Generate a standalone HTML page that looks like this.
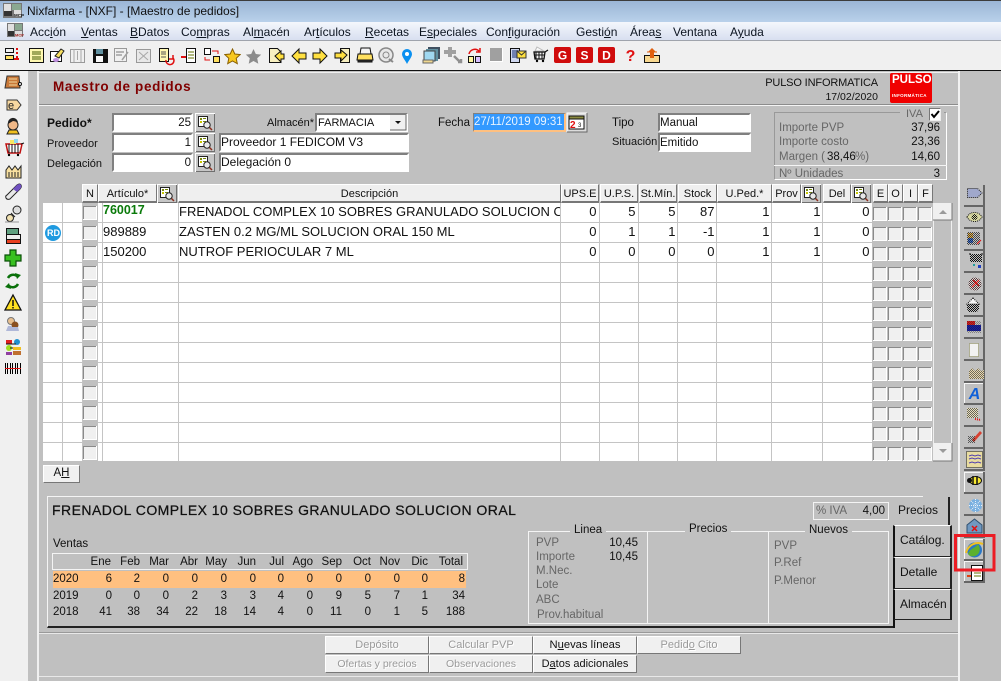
<!DOCTYPE html>
<html lang="es"><head><meta charset="utf-8"><title>Nixfarma</title>
<style>
*{box-sizing:border-box}
html,body{margin:0;padding:0}
body{width:1001px;height:681px;overflow:hidden;position:relative;background:#c0c0c0;font:11px "Liberation Sans",sans-serif;color:#111}
.a,.t,.i,.b,.h,.tab,.row,.sales{position:absolute}
.t{white-space:nowrap;line-height:14px}
.g{color:#666}
.i{background:#fff;border:2px solid;border-color:#808080 #fff #fff #808080;font-size:11.5px;line-height:17px;padding:0;white-space:nowrap;overflow:hidden}
.b{background:#f0f0f0;border:1px solid;border-color:#fff #777 #777 #fff;text-align:center;white-space:nowrap}
.h{top:184px;height:19px;background:#efefef;border-top:1px solid #fff;border-left:1px solid #fff;border-right:1px solid #777;border-bottom:2px solid #777;text-align:center;line-height:18px;font-size:11px;white-space:nowrap}
.menu{position:absolute;top:25px;font-size:12px;line-height:14px;color:#0c1420;white-space:nowrap}
.row{left:102px;width:770px;height:20px;display:grid;grid-template-columns:76px 382px 39px 39px 40px 39px 55px 51px 49px;font-size:13px;line-height:17px;white-space:nowrap}
.row div{text-align:right;padding-right:2.5px;overflow:hidden}
.row div:nth-child(1),.row div:nth-child(2){text-align:left;padding:0 0 0 1px}
.sales{left:53px;width:413px;height:17px;display:grid;grid-template-columns:30px 29px 28px 29px 29px 29px 29px 28px 29px 29px 29px 29px 28px 37px;font-size:11.5px;line-height:17px;white-space:nowrap}
.sales div{text-align:right}
.sales div:first-child{text-align:left}
.tab{background:#c0c0c0;border-style:solid;border-color:#fff #222 #222 #111;font-size:12px;line-height:28px;padding-left:5px;border-width:1px 2px 1px 2px}
.dis{color:#9a9a9a;text-shadow:1px 1px 0 #fff}
</style></head><body>

<!-- title + menu + toolbar -->
<div class="a" style="left:0;top:0;width:1001px;height:22px;background:linear-gradient(#9bb6d6,#b9d1ea);border-top:1px solid #3c3c3c"></div>
<div class="t" style="left:27px;top:4px;font-size:12px;color:#111">Nixfarma - [NXF] - [Maestro de pedidos]</div>
<div class="a" style="left:0;top:22px;width:1001px;height:19px;background:linear-gradient(#f4f7fc,#d8dff0);border-bottom:1px solid #a0a4ac"></div>
<div class="menu" style="left:30px">Acc<u>i</u>ón</div>
<div class="menu" style="left:81px"><u>V</u>entas</div>
<div class="menu" style="left:130px"><u>B</u>Datos</div>
<div class="menu" style="left:181px">Co<u>m</u>pras</div>
<div class="menu" style="left:243px">Al<u>m</u>acén</div>
<div class="menu" style="left:304px">Ar<u>t</u>ículos</div>
<div class="menu" style="left:365px"><u>R</u>ecetas</div>
<div class="menu" style="left:419px">E<u>s</u>peciales</div>
<div class="menu" style="left:486px">Con<u>f</u>iguración</div>
<div class="menu" style="left:576px">Gesti<u>ó</u>n</div>
<div class="menu" style="left:630px">Área<u>s</u></div>
<div class="menu" style="left:673px">Ventana</div>
<div class="menu" style="left:730px">A<u>y</u>uda</div>
<div class="a" style="left:0;top:41px;width:1001px;height:29px;background:#f0f0f0"></div>
<div class="a" style="left:0;top:70px;width:1001px;height:1px;background:#111"></div>

<!-- left rail -->
<div class="a" style="left:0;top:71px;width:28px;height:610px;background:#f0f0f0"></div>
<div class="a" style="left:37px;top:71px;width:2px;height:610px;background:#f0f0f0"></div>

<!-- right rail and panel separators -->
<div class="a" style="left:958px;top:71px;width:2px;height:610px;background:#f2f2f2"></div>
<div class="a" style="left:39px;top:72px;width:919px;height:1px;background:#f0f0f0"></div>
<div class="a" style="left:39px;top:104px;width:919px;height:2px;background:linear-gradient(#8c8c8c 50%,#f4f4f4 50%)"></div>
<div class="a" style="left:39px;top:633px;width:919px;height:1px;background:#e8e8e8"></div>
<div class="a" style="left:39px;top:676px;width:919px;height:1px;background:#e8e8e8"></div>
<div class="a" style="left:39px;top:632px;width:919px;height:1px;background:#999"></div>

<!-- header -->
<div class="t" style="left:53px;top:80px;font-size:13.5px;font-weight:bold;color:#800000;letter-spacing:.64px">Maestro de pedidos</div>
<div class="t" style="right:123px;top:76px;font-size:11px;letter-spacing:-.15px">PULSO INFORMATICA</div>
<div class="t" style="right:123px;top:90px;font-size:10.5px">17/02/2020</div>
<div class="a" style="left:890px;top:73px;width:42px;height:30px;background:#f00000;border-radius:2px"></div>
<div class="t" style="left:892px;top:73px;font-size:11.5px;font-weight:bold;color:#fff">PULSO</div>
<div class="t" style="left:892px;top:92px;font-size:4.5px;font-weight:bold;color:#fff;letter-spacing:.3px;line-height:8px">INFORMÁTICA</div>

<!-- form -->
<div class="t" style="left:47px;top:116px;font-size:12px;font-weight:bold">Pedido*</div>
<div class="t" style="left:47px;top:137px">Proveedor</div>
<div class="t" style="left:47px;top:157px">Delegación</div>
<div class="i" style="left:112px;top:113px;width:81px;height:19px;text-align:right">25</div>
<div class="i" style="left:112px;top:133px;width:81px;height:19px;text-align:right">1</div>
<div class="i" style="left:112px;top:153px;width:81px;height:19px;text-align:right">0</div>
<div class="i" style="left:219px;top:133px;width:190px;height:19px;font-size:12px;line-height:14px">Proveedor 1 FEDICOM V3</div>
<div class="i" style="left:219px;top:153px;width:190px;height:19px;font-size:12px;line-height:14px">Delegación 0</div>
<div class="t" style="left:267px;top:116px">Almacén*</div>
<div class="i" style="left:315px;top:113px;width:93px;height:19px;font-size:11px;line-height:15px;padding:1px 0 0 1px">FARMACIA</div>
<div class="t" style="left:438px;top:116px;font-size:11.5px">Fecha</div>
<div class="i" style="left:473px;top:113px;width:93px;height:19px;border-width:1px 2px 2px 1px;border-color:#808080 #ffc080 #ffc080 #808080;padding:0"><span style="display:block;background:#3399ff;color:#e9f4ff;height:16px;line-height:16px;width:90px;font-size:11.5px">27/11/2019 09:31</span></div>
<div class="t" style="left:612px;top:116px;font-size:11.5px">Tipo</div>
<div class="t" style="left:612px;top:135px">Situación</div>
<div class="i" style="left:658px;top:113px;width:93px;height:19px;line-height:16px">Manual</div>
<div class="i" style="left:658px;top:133px;width:93px;height:19px;line-height:16px">Emitido</div>

<!-- totals box -->
<div class="a" style="left:774px;top:112px;width:173px;height:68px;border:1px solid;border-color:#999 #fff #fff #999"></div>
<div class="a" style="left:774px;top:165px;width:173px;height:1px;background:#f4f4f4"></div>
<div class="a" style="left:900px;top:108px;width:44px;height:8px;background:#c0c0c0"></div>
<div class="t g" style="left:906px;top:107px">IVA</div>
<div class="a" style="left:929px;top:108px;width:12px;height:13px;background:#fff;border:1px solid;border-color:#777 #eee #eee #777"></div>
<div class="t g" style="left:779px;top:121px;font-size:11.5px">Importe PVP</div>
<div class="t g" style="left:779px;top:135px;font-size:11.5px">Importe costo</div>
<div class="t g" style="left:779px;top:150px;font-size:11.5px">Margen (</div>
<div class="t" style="left:827px;top:150px;font-size:11.5px">38,46</div>
<div class="t g" style="left:855px;top:150px;font-size:11.5px">%)</div>
<div class="t" style="right:61px;top:121px;font-size:11.5px">37,96</div>
<div class="t" style="right:61px;top:135px;font-size:11.5px">23,36</div>
<div class="t" style="right:61px;top:150px;font-size:11.5px">14,60</div>
<div class="t g" style="left:779px;top:167px;font-size:11.5px">Nº Unidades</div>
<div class="t" style="right:61px;top:167px;font-size:11.5px">3</div>

<!-- grid -->
<svg class="a" style="left:0;top:0" width="1001" height="681" xmlns="http://www.w3.org/2000/svg">
<defs>
<pattern id="rl" width="20" height="20" patternUnits="userSpaceOnUse" y="222"><rect y="0" width="20" height="1" fill="#c4c4c4"/></pattern>
<symbol id="cb" width="14" height="14" viewBox="0 0 14 14"><rect width="14" height="14" fill="#fff"/><rect width="13" height="13" fill="#8a8a8a"/><rect x="1" y="1" width="12" height="12" fill="#f0f0f0"/></symbol>
<symbol id="lk" width="20" height="19" viewBox="0 0 20 19"><rect width="20" height="19" fill="#fff"/><rect x="1" y="1" width="19" height="18" fill="#6f6f6f"/><rect x="1" y="1" width="18" height="17" fill="#c6c6c6"/><rect x="3.5" y="3.5" width="9" height="10" fill="#fff" stroke="#222"/><rect x="5" y="5" width="2" height="2" fill="#7a8a10"/><rect x="8" y="5" width="3" height="1" fill="#7a8a10"/><rect x="5" y="8" width="2" height="2" fill="#c8c800"/><rect x="8" y="8" width="3" height="1" fill="#7a8a10"/><circle cx="12" cy="12" r="3.2" fill="#e8e8e8" stroke="#222"/><path d="M14.5 14.5L17 17" stroke="#8a3020" stroke-width="1.500"/></symbol>
</defs>
<rect x="43" y="203" width="829" height="258" fill="#fff"/>
<rect x="43" y="203" width="829" height="258" fill="url(#rl)"/>
<rect x="82" y="203" width="16" height="258" fill="#c0c0c0"/>
<path d="M62.500 203V461M82.500 203V461M102.500 203V461M178.500 203V461M560.500 203V461M599.500 203V461M638.500 203V461M677.500 203V461M716.500 203V461M771.500 203V461M822.500 203V461" stroke="#c4c4c4"/>
<g id="r0"><use href="#cb" x="83" y="206"/><use href="#cb" x="873" y="207"/><use href="#cb" x="888" y="207"/><use href="#cb" x="903" y="207"/><use href="#cb" x="918" y="207"/></g>
<use href="#r0" y="20"/><use href="#r0" y="40"/><use href="#r0" y="60"/><use href="#r0" y="80"/><use href="#r0" y="100"/><use href="#r0" y="120"/><use href="#r0" y="140"/><use href="#r0" y="160"/><use href="#r0" y="180"/><use href="#r0" y="200"/><use href="#r0" y="220"/><use href="#r0" y="240"/>
<circle cx="53" cy="233" r="8" fill="#1f9ae0"/>
<!-- scrollbar -->
<path d="M933.500 220V443M951.500 220V443" stroke="#efefef"/>
<rect x="933" y="203" width="19" height="17" fill="#f0f0f0"/><path d="M952 203V220H933" fill="none" stroke="#777"/><path d="M939 214h8l-4-4z" fill="#9a9a9a"/>
<rect x="933" y="443" width="19" height="18" fill="#f0f0f0"/><path d="M952 443V461H933" fill="none" stroke="#777"/><path d="M939 449h8l-4 4z" fill="#9a9a9a"/>
<use href="#lk" x="157" y="184"/><use href="#lk" x="801" y="184"/><use href="#lk" x="851" y="184"/>
<use href="#lk" x="195" y="113"/><use href="#lk" x="195" y="133"/><use href="#lk" x="195" y="153"/>
</svg>
<div class="t" style="left:47px;top:226px;color:#fff;font-size:9px;font-weight:bold">RD</div>

<div class="h" style="left:82px;width:16px">N</div>
<div class="h" style="left:98px;width:59px">Artículo*</div>
<div class="h" style="left:178px;width:383px">Descripción</div>
<div class="h" style="left:561px;width:38px">UPS.E</div>
<div class="h" style="left:600px;width:38px">U.P.S.</div>
<div class="h" style="left:639px;width:38px">St.Mín.</div>
<div class="h" style="left:678px;width:39px">Stock</div>
<div class="h" style="left:717px;width:55px">U.Ped.*</div>
<div class="h" style="left:772px;width:29px">Prov</div>
<div class="h" style="left:823px;width:28px">Del</div>
<div class="h" style="left:873px;width:15px">E</div>
<div class="h" style="left:888px;width:15px">O</div>
<div class="h" style="left:903px;width:15px">I</div>
<div class="h" style="left:918px;width:15px">F</div>

<div class="row" style="top:203px"><div style="font-weight:bold;color:#0a7a0a;font-size:12.5px;line-height:15px">760017</div><div>FRENADOL COMPLEX 10 SOBRES GRANULADO SOLUCION ORAL</div><div>0</div><div>5</div><div>5</div><div>87</div><div>1</div><div>1</div><div>0</div></div>
<div class="row" style="top:223px"><div>989889</div><div>ZASTEN 0.2 MG/ML SOLUCION ORAL 150 ML</div><div>0</div><div>1</div><div>1</div><div>-1</div><div>1</div><div>1</div><div>0</div></div>
<div class="row" style="top:243px"><div>150200</div><div>NUTROF PERIOCULAR 7 ML</div><div>0</div><div>0</div><div>0</div><div>0</div><div>1</div><div>1</div><div>0</div></div>

<!-- AH -->
<div class="b" style="left:43px;top:465px;width:37px;height:18px;font-size:11.5px;line-height:15px">A<u>H</u></div>

<!-- detail panel -->
<div class="a" style="left:47px;top:496px;width:846px;height:132px;border:1px solid;border-color:#f4f4f4 #111 #222 #f4f4f4;border-bottom-width:2px;border-right:none"></div>
<div class="a" style="left:893px;top:496px;width:30px;height:1px;background:#f4f4f4"></div>
<div class="t" style="left:52px;top:503px;font-size:14px;-webkit-text-stroke:.25px #111;letter-spacing:.46px">FRENADOL COMPLEX 10 SOBRES GRANULADO SOLUCION ORAL</div>
<div class="t" style="left:53px;top:537px;font-size:11.5px">Ventas</div>
<div class="a" style="left:52px;top:553px;width:416px;height:17px;border:1px solid #f4f4f4"></div>
<div class="a" style="left:53px;top:571px;width:413px;height:17px;background:#ffc080"></div>
<div class="sales" style="top:554px"><div></div><div style="margin-right:1px">Ene</div><div>Feb</div><div>Mar</div><div>Abr</div><div>May</div><div>Jun</div><div>Jul</div><div>Ago</div><div>Sep</div><div>Oct</div><div>Nov</div><div>Dic</div><div style="margin-right:2px">Total</div></div>
<div class="sales" style="top:571px"><div>2020</div><div>6</div><div>2</div><div>0</div><div>0</div><div>0</div><div>0</div><div>0</div><div>0</div><div>0</div><div>0</div><div>0</div><div>0</div><div>8</div></div>
<div class="sales" style="top:588px"><div>2019</div><div>0</div><div>0</div><div>0</div><div>2</div><div>3</div><div>3</div><div>4</div><div>0</div><div>9</div><div>5</div><div>7</div><div>1</div><div>34</div></div>
<div class="sales" style="top:604px"><div>2018</div><div>41</div><div>38</div><div>34</div><div>22</div><div>18</div><div>14</div><div>4</div><div>0</div><div>11</div><div>0</div><div>1</div><div>5</div><div>188</div></div>

<div class="a" style="left:813px;top:502px;width:76px;height:18px;border:1px solid #f4f4f4"></div>
<div class="t g" style="left:816px;top:504px;font-size:11.5px">% IVA</div>
<div class="t" style="right:116px;top:504px;font-size:11.5px">4,00</div>

<div class="a" style="left:528px;top:531px;width:361px;height:93px;border:1px solid #f4f4f4"></div>
<div class="a" style="left:647px;top:531px;width:1px;height:92px;background:#f4f4f4"></div>
<div class="a" style="left:768px;top:531px;width:1px;height:92px;background:#f4f4f4"></div>
<div class="t" style="left:570px;top:523px;background:#c0c0c0;padding:0 4px;font-size:11.5px">Linea</div>
<div class="t" style="left:685px;top:522px;background:#c0c0c0;padding:0 4px;font-size:11.5px">Precios</div>
<div class="t" style="left:805px;top:523px;background:#c0c0c0;padding:0 4px;font-size:11.5px">Nuevos</div>
<div class="t g" style="left:536px;top:536px;font-size:11.5px">PVP</div>
<div class="t g" style="left:536px;top:550px;font-size:11.5px">Importe</div>
<div class="t g" style="left:536px;top:564px;font-size:11.5px">M.Nec.</div>
<div class="t g" style="left:536px;top:578px;font-size:11.5px">Lote</div>
<div class="t g" style="left:536px;top:593px;font-size:11.5px">ABC</div>
<div class="t g" style="left:537px;top:608px;font-size:11.5px">Prov.habitual</div>
<div class="t" style="right:363px;top:536px;font-size:11.5px">10,45</div>
<div class="t" style="right:363px;top:550px;font-size:11.5px">10,45</div>
<div class="t g" style="left:774px;top:539px;font-size:11.5px">PVP</div>
<div class="t g" style="left:774px;top:556px;font-size:11.5px">P.Ref</div>
<div class="t g" style="left:774px;top:574px;font-size:11.5px">P.Menor</div>

<!-- tabs -->
<div class="a" style="left:893px;top:497px;width:57px;height:28px;border-right:2px solid #222;font-size:12px;line-height:26px;padding-left:5px">Precios</div>
<div class="tab" style="left:893px;top:525px;width:59px;height:32px;line-height:29px">Catálog.</div>
<div class="tab" style="left:893px;top:557px;width:59px;height:32px">Detalle</div>
<div class="tab" style="left:893px;top:589px;width:59px;height:31px">Almacén</div>
<div class="a" style="left:893px;top:620px;width:2px;height:8px;background:#111"></div>

<!-- bottom buttons -->
<div class="b dis" style="left:325px;top:636px;width:104px;height:18px;font-size:11px;line-height:16px">Depósito</div>
<div class="b dis" style="left:429px;top:636px;width:104px;height:18px;font-size:11px;line-height:16px">Calcular PVP</div>
<div class="b" style="left:533px;top:636px;width:104px;height:18px;font-size:11.2px;line-height:16px">N<u>u</u>evas líneas</div>
<div class="b dis" style="left:637px;top:636px;width:104px;height:18px;font-size:11px;line-height:16px">Pedid<u>o</u> Cito</div>
<div class="b dis" style="left:325px;top:655px;width:104px;height:18px;font-size:10.5px;line-height:16px">Ofertas y precios</div>
<div class="b dis" style="left:429px;top:655px;width:104px;height:18px;font-size:10.5px;line-height:16px">Observaciones</div>
<div class="b" style="left:533px;top:655px;width:104px;height:18px;font-size:11px;line-height:16px">D<u>a</u>tos adicionales</div>

<!-- icons overlay -->
<svg class="a" style="left:0;top:0" width="1001" height="681" xmlns="http://www.w3.org/2000/svg" font-family="Liberation Sans, sans-serif">
<defs>
<pattern id="dith" width="2" height="2" patternUnits="userSpaceOnUse"><rect width="1" height="1" fill="#111"/><rect x="1" y="1" width="1" height="1" fill="#111"/></pattern>
<symbol id="star" width="17" height="17" viewBox="0 0 17 17"><path d="M8.500 1l2.300 5 5.400.6-4 3.700 1.100 5.400-4.800-2.700-4.800 2.700 1.100-5.400-4-3.700 5.400-.6z"/></symbol>
<symbol id="rb" width="21" height="22" viewBox="0 0 21 22"><rect width="21" height="22" fill="#c0c0c0"/><path d="M20 0V21H0" fill="none" stroke="#666" stroke-width="2"/></symbol>
<symbol id="rbw" width="21" height="22" viewBox="0 0 21 22"><rect width="21" height="22" fill="#c0c0c0"/><path d="M0 21V0H20" fill="none" stroke="#f6f6f6" stroke-width="2"/><path d="M20 0V21H0" fill="none" stroke="#666" stroke-width="2"/></symbol>
</defs>

<!-- app icons -->
<rect x="3" y="3" width="19" height="15" fill="#777"/><rect x="4" y="4" width="7" height="9" fill="#e0e0e0"/><rect x="12" y="4" width="9" height="6" fill="#8aa890"/><rect x="4" y="11" width="8" height="5" fill="#333"/><rect x="14" y="10" width="7" height="7" fill="#ddd"/><text x="14" y="17" font-size="4.500" font-weight="bold" fill="#111">MCP</text>
<rect x="7" y="23" width="16" height="14" fill="#777"/><rect x="8" y="24" width="6" height="8" fill="#e0e0e0"/><rect x="15" y="24" width="7" height="6" fill="#8aa890"/><rect x="8" y="31" width="6" height="5" fill="#333"/><rect x="15" y="31" width="7" height="6" fill="#ddd"/><text x="15" y="36.500" font-size="4" font-weight="bold" fill="#a02020">MCP</text>

<!-- toolbar -->
<g fill="none" stroke-width="1">
<rect x="5.500" y="48.500" width="8" height="4" stroke="#111"/><rect x="5.500" y="55.500" width="8" height="4" fill="#ffe060" stroke="#111"/><path d="M17 48v2M17 52v2M17 56v2M14 59h5" stroke="#e01010" stroke-width="2"/>
<rect x="29.500" y="48.500" width="14" height="14" fill="#fff8b0" stroke="#111"/><path d="M32 52h9M32 54h9M32 57h9M32 59h9" stroke="#455a00"/>
<rect x="50.500" y="51.500" width="11" height="10" fill="#fff" stroke="#111"/><path d="M55 56l6-7 3 2-5 7z" fill="#f8e060" stroke="#222"/><ellipse cx="56" cy="60" rx="3" ry="2" fill="#c090e0"/>
<rect x="70.500" y="49.500" width="14" height="13" stroke="#9a9a9a" fill="#f0f0f0"/><path d="M74 49v13M81 49v13M77.500 51v9" stroke="#a8a8a8"/>
<rect x="93" y="49" width="15" height="14" fill="#111"/><rect x="96" y="49" width="7" height="5" fill="#6090a0"/><rect x="96" y="56" width="7" height="6" fill="#f8f8f8"/>
<rect x="114.500" y="48.500" width="12" height="13" stroke="#999"/><path d="M116 52h8M116 55h6M122 60l6-8" stroke="#a0a0a0" stroke-width="1.500"/>
<rect x="136.500" y="49.500" width="14" height="13" stroke="#999" fill="#e8e8e8"/><path d="M139 52l9 8M148 52l-9 8" stroke="#a8a8a8"/>
<rect x="159.500" y="48.500" width="9" height="13" fill="#fff8b0" stroke="#111"/><path d="M161 52h5M161 54h5M161 57h5" stroke="#555"/><path d="M166 60a4 4 0 1 0 7-2M173 55v4h-4" stroke="#e01010" stroke-width="1.500"/>
<rect x="186.500" y="48.500" width="9" height="14" fill="#fff" stroke="#111"/><path d="M188 52h6M188 55h6M188 58h6" stroke="#607000"/><path d="M181 57h5" stroke="#e01010" stroke-width="2"/>
<rect x="204.500" y="48.500" width="6" height="6" fill="#fff" stroke="#111"/><rect x="213.500" y="56.500" width="6" height="6" fill="#ffe060" stroke="#111"/><path d="M212 51h6v3M210 60h-5v-3" stroke="#e01010"/>
</g>
<use href="#star" x="224" y="48" fill="#f8c820" stroke="#8a6000"/>
<use href="#star" x="245" y="48" fill="#8c8c8c"/>
<g stroke="#111" stroke-width="1">
<path d="M269.500 48.500h8l3 3v11h-11z" fill="#f8f0c0"/><path d="M275 56l6-5v3h3v5h-3v3z" fill="#ffe040"/>
<path d="M292 56l7-7v4h7v6h-7v4z" fill="#ffe040"/>
<path d="M327 56l-7-7v4h-7v6h7v4z" fill="#ffe040"/>
<path d="M340.500 48.500h9v14h-9z" fill="#f8f0c0"/><path d="M347 55l-6-5v3h-6v5h6v3z" fill="#ffe040"/>
<path d="M361 48h9l1 6h-11z" fill="#f4f4f4"/><path d="M358 54h14l1 6h-16z" fill="#ffe060"/><rect x="358" y="60" width="14" height="2" fill="#333"/>
</g>
<circle cx="386" cy="55" r="7" fill="#e8e8e8" stroke="#888" stroke-width="1.500"/><circle cx="386" cy="55" r="3" fill="none" stroke="#888"/><path d="M389 59l4 3" stroke="#888" stroke-width="2"/>
<path d="M407 49a5 5 0 0 1 5 5c0 3-3 6-5 10-2-4-5-7-5-10a5 5 0 0 1 5-5z" fill="#0a90f0"/><circle cx="407" cy="54" r="2" fill="#fff"/>
<rect x="428" y="47" width="12" height="12" fill="#405060"/><rect x="426" y="49" width="12" height="12" fill="#6090a0"/><rect x="424" y="51" width="11" height="10" fill="#a0d8f0" stroke="#444"/><rect x="423" y="60" width="10" height="3" fill="#f0d890" stroke="#666"/>
<path d="M444 50h4v-3h4v3h4v4h-4v3h-4v-3h-4z" fill="#a0a0a0"/><path d="M454 56l6 6M458 62h3v-3" stroke="#909090" stroke-width="2.500" fill="none"/>
<path d="M469 54a6 6 0 0 1 10-3M480 48v4h-4" fill="none" stroke="#e01010" stroke-width="1.500"/><rect x="468.500" y="56.500" width="5" height="6" fill="#fff8a0" stroke="#111"/><rect x="475.500" y="56.500" width="5" height="6" fill="#d8c0ff" stroke="#111"/>
<rect x="490" y="48" width="12" height="13" fill="#a0a0a0"/><path d="M490 61.500h13M502.500 48v14" stroke="#fff"/>
<rect x="510.500" y="48.500" width="9" height="14" fill="#d0d8f0" stroke="#111"/><rect x="512" y="50" width="6" height="8" fill="#7080b0"/><rect x="517" y="51" width="9" height="7" fill="#ffe040" stroke="#333"/><path d="M517 51l4.500 4 4.500-4" fill="none" stroke="#333"/>
<path d="M537 47l7 4h-9z" fill="#f8f8f8" stroke="#bbb"/><path d="M534 52h11l-1 7h-9zM545 52l3-2" fill="none" stroke="#111" stroke-width="1.300"/><path d="M536 52v7M539 52v7M542 52v7M534 55h11" stroke="#111"/><circle cx="537" cy="61" r="1.200"/><circle cx="543" cy="61" r="1.200"/>
<g font-weight="bold" font-size="12" text-anchor="middle" fill="#fff">
<rect x="554" y="47" width="17" height="16" rx="2" fill="#d00c0c"/><text x="562.500" y="59.500">G</text>
<rect x="576" y="47" width="17" height="16" rx="2" fill="#d00c0c"/><text x="584.500" y="59.500">S</text>
<rect x="598" y="47" width="17" height="16" rx="2" fill="#d00c0c"/><text x="606.500" y="59.500">D</text>
</g>
<text x="630.500" y="61" text-anchor="middle" font-size="16" font-weight="bold" fill="#e01010">?</text>
<rect x="644.500" y="55.500" width="15" height="7" fill="#f8d890" stroke="#111"/><path d="M652 48l4 4h-2v6h-4v-6h-2z" fill="#e06010"/><path d="M647 52h10" stroke="#e06010"/>

<!-- left rail icons -->
<g stroke-width="1">
<path d="M7 76h12l1 12h-15z" fill="#c87838" stroke="#333"/><path d="M9 79h8M9 82h8M9 85h8" stroke="#f0d8a0"/><circle cx="20" cy="84" r="1.500" fill="#fff" stroke="#111"/>
<path d="M7 100h10l4 5-4 5h-10z" fill="#f8d8a0" stroke="#333"/><text x="8" y="109" font-size="11" fill="#222">e</text>
<circle cx="13" cy="125" r="5" fill="#f0b888" stroke="#222"/><path d="M8 124a5 5 0 0 1 10-2l-5-1z" fill="#222"/><path d="M7 134l2-4h8l2 4z" fill="#f0c020" stroke="#222"/>
<path d="M6 144h16l-2 9H8z" fill="#fff" stroke="#c01010" stroke-width="1.500"/><path d="M9 144v9M12 144v9M15 144v9M18 144v9" stroke="#111"/><rect x="10" y="140" width="6" height="4" fill="#f8e860"/><rect x="14" y="139" width="4" height="4" fill="#90d8f0"/><circle cx="9" cy="155" r="1.200"/><circle cx="18" cy="155" r="1.200"/><path d="M21 144l3-1" stroke="#111"/>
<path d="M6 178v-8l3-4 3 4 3-4 3 4 3-4v12z" fill="#f8e0a0" stroke="#222"/><path d="M9 172v5M12 172v5M15 172v5M18 172v5" stroke="#222"/>
<path d="M7 195l10-10q3-2 4 0t-1 4l-10 10q-3 1-4-1t1-3z" fill="#e8e8e8" stroke="#222"/><path d="M13 189l4-4q3-2 4 0t-1 4l-3 3z" fill="#7050c0"/>
<circle cx="17" cy="210" r="4" fill="#ddd" stroke="#222"/><circle cx="10" cy="218" r="3.500" fill="#f0e0b0" stroke="#222"/><path d="M11 213l4 4" stroke="#222"/><path d="M5 222h14" stroke="#999"/>
<rect x="6.500" y="228.500" width="12" height="6" fill="#60a080" stroke="#111"/><rect x="6.500" y="234.500" width="14" height="5" fill="#eee" stroke="#111"/><rect x="6.500" y="239.500" width="14" height="4" fill="#e84020" stroke="#111"/>
<path d="M10 250h6v5h5v6h-5v5h-6v-5H5v-6h5z" fill="#38c020" stroke="#0a5008" stroke-width="1.200"/>
<path d="M8 278a6 6 0 0 1 9-2M18 284a6 6 0 0 1-9 2" fill="none" stroke="#0a700a" stroke-width="2.500"/><path d="M15 273l6 2-4 4zM11 289l-6-2 4-4z" fill="#0a700a"/>
<path d="M13 295l8 15H5z" fill="#ffe020" stroke="#111" stroke-width="1.300"/><path d="M13 300v6M13 307v1.500" stroke="#111" stroke-width="1.500"/>
<circle cx="11" cy="321" r="3.500" fill="#e8c090" stroke="#777"/><circle cx="15" cy="325" r="3.500" fill="#8a5020"/><path d="M6 331l2-5h4v5zM11 331l1-4h6l1 4z" fill="#b0b8d8"/>
<rect x="6" y="340" width="6" height="4" fill="#e02020"/><circle cx="17" cy="342" r="3" fill="#2090d0"/><circle cx="9" cy="348" r="3" fill="#a0e020"/><rect x="13" y="347" width="8" height="3" fill="#f0c020"/><rect x="6" y="352" width="6" height="3" fill="#9040a0"/><rect x="13" y="351" width="8" height="4" fill="#c07030"/><path d="M6 344h10M10 348h3" stroke="#111"/>
<path d="M5.500 363v11M7.500 363v11M10.500 363v11M12.500 363v11M15.500 363v11M17.500 363v11M20.500 363v11" stroke="#000"/><path d="M5 368.500h16" stroke="#e01010"/>
</g>

<!-- right rail -->
<use href="#rb" x="964" y="185"/><use href="#rb" x="964" y="207"/><use href="#rb" x="964" y="229"/><use href="#rb" x="964" y="251"/><use href="#rb" x="964" y="273"/><use href="#rb" x="964" y="295"/><use href="#rb" x="964" y="317"/><use href="#rb" x="964" y="339"/><use href="#rb" x="964" y="361"/>
<use href="#rbw" x="964" y="383"/><use href="#rb" x="964" y="405"/><use href="#rb" x="964" y="427"/><use href="#rb" x="964" y="449"/><use href="#rbw" x="964" y="472"/><use href="#rb" x="964" y="494"/><use href="#rb" x="964" y="516"/><use href="#rbw" x="964" y="539"/><use href="#rbw" x="964" y="561"/>
<path d="M967.500 188.500h10l4.500 4.500-4.500 4.500h-10z" fill="#a0a8cc" stroke="#222" stroke-dasharray="1 1"/>
<path d="M967 217c3-6 12-6 15 0-3 6-12 6-15 0z" fill="#d8d8a0" stroke="#111" stroke-dasharray="1 1"/><circle cx="974.500" cy="217" r="3" fill="url(#dith)"/>
<rect x="968" y="233" width="5" height="5" fill="#e0b050"/><rect x="968" y="238" width="5" height="5" fill="#4070d0"/><rect x="967" y="232" width="13" height="13" fill="url(#dith)" opacity=".7"/><path d="M977 244l4-4" stroke="#e01010"/>
<rect x="970" y="254" width="12" height="8" fill="url(#dith)"/><rect x="973" y="264" width="2" height="2" fill="#20a0a0"/><rect x="978" y="265" width="3" height="3" fill="#2040c0"/><path d="M970 253v2M982 253v2" stroke="#111"/>
<circle cx="975" cy="284" r="6.500" fill="#e8d0d0"/><circle cx="975" cy="284" r="6.500" fill="url(#dith)" opacity=".75"/><path d="M972 287l7-7M973 280l6 6" stroke="#e01010"/>
<path d="M967 304h12v5l-2 3h-8l-2-3z" fill="url(#dith)"/><path d="M973 298l6 6h-12z" fill="#f4f4f4" stroke="#111" stroke-dasharray="1 1"/>
<rect x="967" y="321" width="8" height="4" fill="#d02020"/><rect x="967" y="325" width="14" height="6" fill="#1820a0"/><rect x="967" y="321" width="14" height="12" fill="url(#dith)" opacity=".35"/>
<rect x="969.500" y="343.500" width="9" height="13" fill="#f2f2f2" stroke="#888850" stroke-dasharray="1 1"/>
<path d="M969 379v-8l3-3 3 3 3-3 3 3 3-1v9z" fill="#e8d8b0"/><path d="M969 379v-8l3-3 3 3 3-3 3 3 3-1v9z" fill="url(#dith)" opacity=".55"/>
<text x="974.500" y="399" font-size="16" font-weight="bold" font-style="italic" fill="#1060d8" text-anchor="middle">A</text>
<rect x="967" y="408" width="11" height="10" fill="#e8e0c0"/><rect x="967" y="408" width="11" height="10" fill="url(#dith)" opacity=".6"/><path d="M975 419l6 1" stroke="#e01010" stroke-dasharray="1 1" stroke-width="2"/>
<path d="M972 440l8-9 2 2-8 9z" fill="#d84030"/><rect x="968" y="436" width="7" height="7" fill="url(#dith)" opacity=".6"/>
<rect x="966.500" y="451.500" width="16" height="16" fill="#e8dca0" stroke="#111" stroke-dasharray="1 1"/><path d="M969 456l3-1 3 1 3-1 3 1M969 459l3-1 3 1 3-1 3 1M969 463l3-1 3 1 3-1 3 1" stroke="#5040b0" fill="none"/>
<ellipse cx="975.500" cy="480.500" rx="6" ry="4" fill="#f8e830" stroke="#111"/><path d="M973 476v9M977 476v9" stroke="#111" stroke-width="1.500"/><circle cx="969.500" cy="480.500" r="2.500" fill="#111"/>
<circle cx="975.500" cy="505.500" r="6.500" fill="#7ab0e0"/><path d="M969 505.500h13M975.500 499v13M971 501l9 9M980 501l-9 9" stroke="#e8f0f8" stroke-dasharray="1 1"/>
<path d="M967 525l7.500-6 7.500 6v8h-15z" fill="#7098c0" stroke="#305070"/><path d="M972 526l5 5M977 526l-5 5" stroke="#e01010" stroke-width="1.500"/>
<circle cx="974.500" cy="550" r="7.500" fill="#2a78c8"/><path d="M968 554c2-6 8-6 10-10 2 3 3 8-1 11-3 2-7 2-9-1z" fill="#5cb030"/><path d="M966 553c2-8 10-12 17-9" fill="none" stroke="#f0c020" stroke-width="2"/>
<rect x="971.500" y="565.500" width="11" height="15" fill="#fff" stroke="#111"/><path d="M974 570h7M974 573h7M974 576h7" stroke="#607000"/><path d="M967 576h4" stroke="#e04010" stroke-width="2"/>
<rect x="955.500" y="535.500" width="38.500" height="34.500" fill="none" stroke="#ec1c24" stroke-width="3"/>

<!-- combo / calendar -->
<rect x="390" y="115" width="16" height="15" fill="#f0f0f0"/><path d="M406 115v15h-16" fill="none" stroke="#666"/><path d="M395 121h6l-3 3z" fill="#111"/>
<rect x="567" y="113" width="20" height="19" fill="#dcdcdc"/><path d="M567 132V113H587" fill="none" stroke="#fff"/><path d="M587 113V132H567" fill="none" stroke="#666"/>
<rect x="569" y="117" width="15" height="12" fill="#fff" stroke="#111"/><rect x="569" y="116" width="15" height="3" fill="#8a8a40" stroke="#111"/><text x="570" y="128" font-size="10" font-weight="bold" fill="#e01010">2</text><text x="578" y="127" font-size="6" fill="#111">3</text>
<path d="M931.500 114l2.500 3 5-6" fill="none" stroke="#000" stroke-width="2"/>
</svg>
</body></html>
